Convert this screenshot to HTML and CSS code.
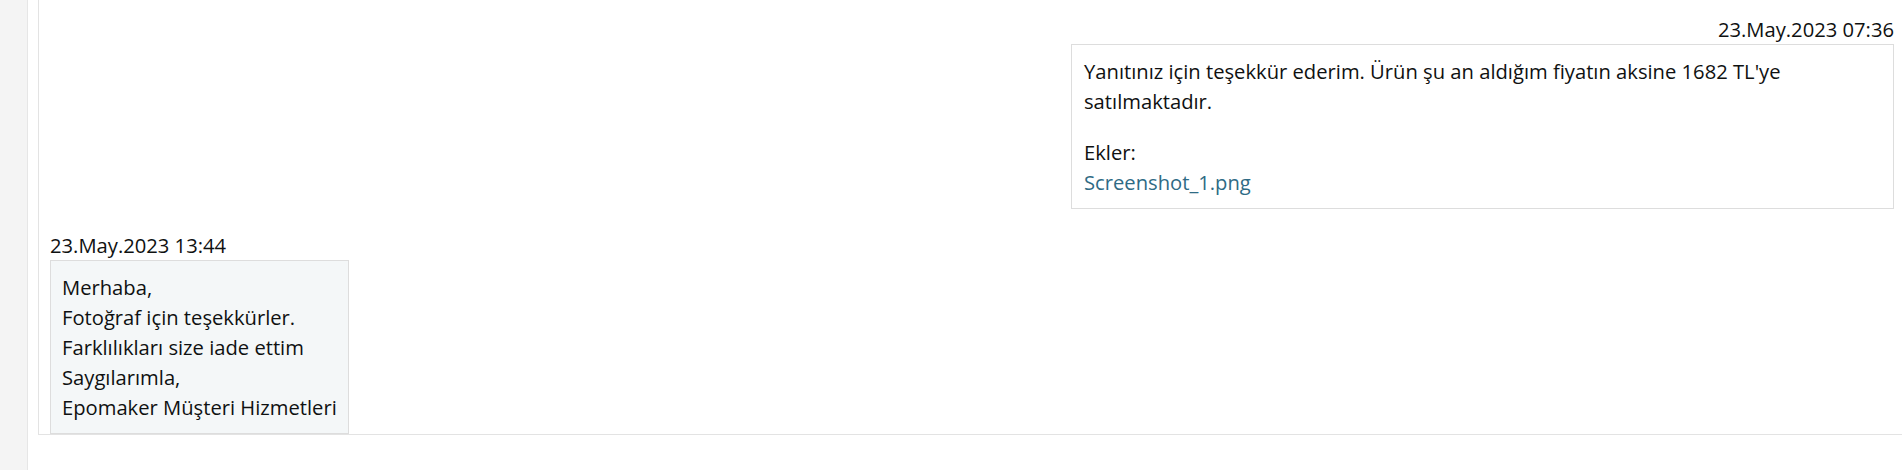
FILE: index.html
```html
<!DOCTYPE html>
<html lang="tr">
<head>
<meta charset="utf-8">
<title>Mesajlar</title>
<link rel="stylesheet" href="styles.css">
</head>
<body>
<div class="page">
  <aside class="sidebar"></aside>
  <main class="main">
    <section class="thread">
      <div class="msg msg-out">
        <div class="stamp">23.May.2023 07:36</div>
        <div class="bubble bubble-out">
          <p class="para">Yanıtınız için teşekkür ederim. Ürün şu an aldığım fiyatın aksine 1682 TL'ye satılmaktadır.</p>
          <p class="para">Ekler:<br><a class="link" href="#">Screenshot_1.png</a></p>
        </div>
      </div>
      <div class="msg msg-in">
        <div class="stamp">23.May.2023 13:44</div>
        <div class="bubble bubble-in">Merhaba,<br>Fotoğraf için teşekkürler.<br>Farklılıkları size iade ettim<br>Saygılarımla,<br>Epomaker Müşteri Hizmetleri</div>
      </div>
    </section>
  </main>
</div>
</body>
</html>
```

FILE: styles.css
```css
html, body {
  margin: 0;
  padding: 0;
  background: #ffffff;
}
body {
  font-family: "Open Sans", "Liberation Sans", sans-serif;
  font-size: 20.2px;
  line-height: 30px;
  color: #0f1111;
}
.page {
  display: flex;
  min-height: 470px;
}
.sidebar {
  width: 27px;
  flex: 0 0 27px;
  background: #f4f4f4;
  border-right: 1px solid #e6e6e6;
}
.main {
  flex: 1;
  padding-left: 10px;
}
.thread {
  display: flex;
  flex-direction: column;
  gap: 21px;
  padding: 14px 8px 0 11px;
  border-left: 1px solid #e3e3e3;
  border-bottom: 1px solid #e3e3e3;
}
.msg {
  display: flex;
  flex-direction: column;
}
.msg-out {
  align-items: flex-end;
}
.msg-in {
  align-items: flex-start;
}
.stamp {
  white-space: nowrap;
}
.bubble {
  box-sizing: border-box;
  border: 1px solid #dddddd;
  padding: 11px 12px;
}
.bubble-out {
  width: 823px;
  background: #ffffff;
}
.bubble-in {
  background: #f4f7f8;
  padding: 11px 11px;
}
.para {
  margin: 0;
}
.para + .para {
  margin-top: 21px;
}
.link {
  color: #2f6b85;
  text-decoration: none;
}
```
